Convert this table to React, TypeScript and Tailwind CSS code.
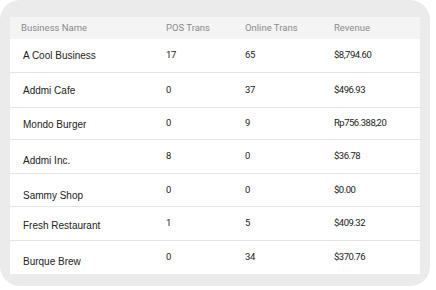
// Business transactions table inside a rounded gray card.

const ROWS = [
  { name: "A Cool Business", pos: "17", online: "65", revenue: "$8,794.60", h: "h-[34px]", nudge: "pt-0" },
  { name: "Addmi Cafe", pos: "0", online: "37", revenue: "$496.93", h: "h-[35px]", nudge: "pt-[1px]" },
  { name: "Mondo Burger", pos: "0", online: "9", revenue: "Rp756.388,20", h: "h-[32px]", nudge: "pt-[2px]" },
  { name: "Addmi Inc.", pos: "8", online: "0", revenue: "$36.78", h: "h-[34px]", nudge: "pt-[8px]" },
  { name: "Sammy Shop", pos: "0", online: "0", revenue: "$0.00", h: "h-[33px]", nudge: "pt-[11px]" },
  { name: "Fresh Restaurant", pos: "1", online: "5", revenue: "$409.32", h: "h-[34px]", nudge: "pt-[3px]" },
  { name: "Burque Brew", pos: "0", online: "34", revenue: "$370.76", h: "h-[33px]", nudge: "pt-[8px]" },
];

export default function App() {
  return (
    <div className="h-[290px] w-[436px] bg-white">
      <div className="h-[286px] w-[430px] rounded-[20px] bg-[#ebebeb] pl-[10px] pt-[17px]">
        <div className="w-[410px] bg-white">
          {/* Header row */}
          <div className="flex h-[22px] items-center bg-[#f4f4f4] font-['Roboto',sans-serif] text-[9.5px] text-[#8a8a8a]">
            <div className="w-[145px] pl-[11px]">Business Name</div>
            <div className="w-[79px] pl-[11px]">POS Trans</div>
            <div className="w-[89px] pl-[11px]">Online Trans</div>
            <div className="flex-1 pl-[11px]">Revenue</div>
          </div>

          {/* Body rows — the name column sits a little lower than the numbers */}
          {ROWS.map((row, i) => (
            <div
              key={row.name}
              className={`flex items-center ${row.h} ${
                i < ROWS.length - 1 ? "border-b border-[#e4e4e4]" : ""
              }`}
            >
              <div
                className={`w-[145px] pl-[13px] ${row.nudge} font-['Liberation_Sans',Arial,sans-serif] text-[10px] text-[#222]`}
              >
                {row.name}
              </div>
              <div className="w-[79px] pl-[11px] font-['Roboto',sans-serif] text-[9.5px] tracking-[-0.3px] text-[#222]">
                {row.pos}
              </div>
              <div className="w-[89px] pl-[11px] font-['Roboto',sans-serif] text-[9.5px] tracking-[-0.3px] text-[#222]">
                {row.online}
              </div>
              <div className="flex-1 pl-[11px] font-['Roboto',sans-serif] text-[9.5px] tracking-[-0.5px] text-[#222]">
                {row.revenue}
              </div>
            </div>
          ))}
        </div>
      </div>
    </div>
  );
}
